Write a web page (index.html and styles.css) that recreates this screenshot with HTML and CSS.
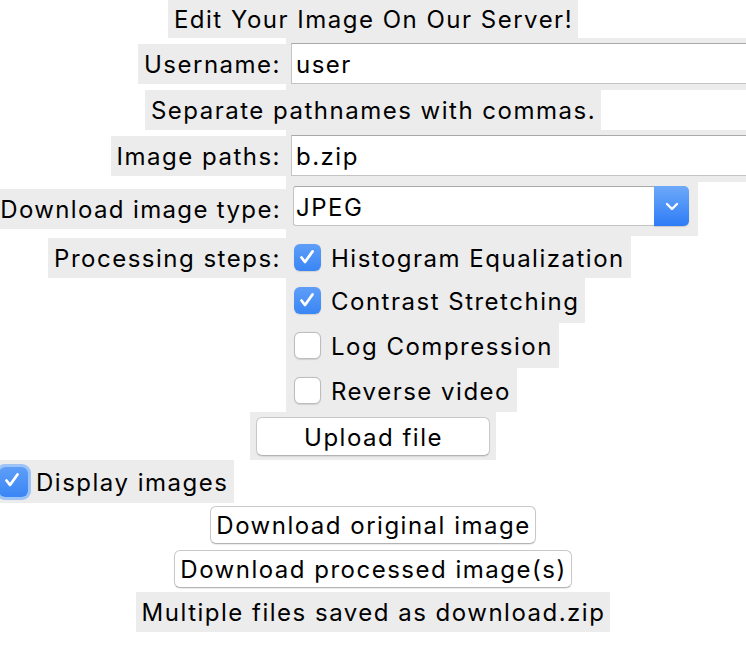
FILE: index.html
```html
<!DOCTYPE html>
<html>
<head>
<meta charset="utf-8">
<link rel="stylesheet" href="styles.css">
</head>
<body>
<div class="app">
  <div class="row-center r-title"><span class="lbl title">Edit Your Image On Our Server!</span></div>

  <div class="form-row r-entry">
    <div class="col-l"><span class="lbl">Username:</span></div>
    <div class="entry-wrap"><div class="entry">user</div></div>
  </div>

  <div class="row-center r-note"><span class="lbl">Separate pathnames with commas.</span></div>

  <div class="form-row r-entry">
    <div class="col-l"><span class="lbl">Image paths:</span></div>
    <div class="entry-wrap"><div class="entry">b.zip</div></div>
  </div>

  <div class="form-row r-combo">
    <div class="col-l"><span class="lbl tight">Download image type:</span></div>
    <div class="combo-wrap">
      <div class="combo">
        <span class="combo-val">JPEG</span>
        <span class="combo-btn"><svg width="14" height="9" viewBox="0 0 14 9"><path d="M2 2 L7 7 L12 2" fill="none" stroke="#fff" stroke-width="2.4" stroke-linecap="round" stroke-linejoin="round"/></svg></span>
      </div>
    </div>
  </div>

  <div class="form-row r-checks">
    <div class="col-l col-top"><span class="lbl">Processing steps:</span></div>
    <div class="checks">
      <div class="check c1"><span class="box on"><svg width="26" height="26" viewBox="0 0 26 26"><path d="M7.5 13.5 L11 18 L18.5 7.5" fill="none" stroke="#fff" stroke-width="2.8" stroke-linecap="round" stroke-linejoin="round"/></svg></span><span class="ctext">Histogram Equalization</span></div>
      <div class="check c2"><span class="box on"><svg width="26" height="26" viewBox="0 0 26 26"><path d="M7.5 13.5 L11 18 L18.5 7.5" fill="none" stroke="#fff" stroke-width="2.8" stroke-linecap="round" stroke-linejoin="round"/></svg></span><span class="ctext">Contrast Stretching</span></div>
      <div class="check c3"><span class="box"></span><span class="ctext">Log Compression</span></div>
      <div class="check c4"><span class="box"></span><span class="ctext">Reverse video</span></div>
    </div>
  </div>

  <div class="row-center r-upload"><div class="btn-wrap"><button class="btn upload">Upload file</button></div></div>

  <div class="r-display">
    <div class="display"><span class="box on focus"><svg width="26" height="26" viewBox="0 0 26 26"><path d="M7.5 13.5 L11 18 L18.5 7.5" fill="none" stroke="#fff" stroke-width="2.8" stroke-linecap="round" stroke-linejoin="round"/></svg></span><span class="ctext">Display images</span></div>
  </div>

  <div class="row-center r-dl1"><button class="btn">Download original image</button></div>
  <div class="row-center r-dl2"><button class="btn">Download processed image(s)</button></div>
  <div class="row-center r-multi"><span class="lbl">Multiple files saved as download.zip</span></div>
</div>
</body>
</html>
```

FILE: styles.css
```css
html, body {
  margin: 0;
  padding: 0;
  background: #ffffff;
}
body {
  width: 746px;
  height: 650px;
  overflow: hidden;
  font-family: Inter, "Open Sans", "Liberation Sans", sans-serif;
  font-size: 24px;
  letter-spacing: 1.5px;
  color: #000;
}
.app {
  display: flex;
  flex-direction: column;
  width: 746px;
}
.lbl {
  background: #ececec;
  height: 40px;
  display: inline-flex;
  align-items: center;
  padding: 1px 5px 0 6px;
  box-sizing: border-box;
  white-space: nowrap;
}
.lbl.tight {
  padding-left: 0;
  letter-spacing: 1.35px;
}
.row-center {
  display: flex;
  justify-content: center;
}
.r-title { height: 38px; }
.r-title .title { height: 38px; }
.form-row {
  display: grid;
  grid-template-columns: 286px 1fr;
  min-width: 0;
}
.col-l {
  display: flex;
  justify-content: flex-end;
  align-items: center;
}
.col-top { align-items: flex-start; padding-top: 2px; }
.r-entry { height: 52px; }
.entry-wrap {
  background: #ececec;
  padding: 5px 0 6px 5px;
  overflow: hidden;
}
.entry {
  width: 600px;
  height: 41px;
  box-sizing: border-box;
  background: #fff;
  border: 1px solid #c4c4c4;
  border-top-color: #a9a9a9;
  display: flex;
  align-items: center;
  padding-left: 4px;
  padding-top: 2px;
}
.r-note { height: 40px; }
.r-combo { height: 54px; }
.combo-wrap {
  background: #ececec;
  width: 412px;
  padding: 4px 0 0 7px;
  box-sizing: border-box;
}
.combo {
  width: 396px;
  height: 40px;
  display: flex;
  box-sizing: border-box;
}
.combo-val {
  flex: 1;
  background: #fff;
  border: 1px solid #c4c4c4;
  border-top-color: #a9a9a9;
  border-right: none;
  border-radius: 3px 0 0 3px;
  display: flex;
  align-items: center;
  padding-left: 2px;
  padding-top: 3px;
}
.combo-btn {
  width: 35px;
  background: linear-gradient(#6ea9f9, #2d7cf6);
  border-radius: 0 5px 5px 0;
  display: flex;
  align-items: center;
  justify-content: center;
  box-shadow: 0 1px 1px rgba(0,0,0,0.15);
}
.checks {
  display: flex;
  flex-direction: column;
  align-items: flex-start;
}
.check {
  background: #ececec;
  display: flex;
  align-items: center;
  padding: 0 6px 0 8px;
  white-space: nowrap;
}
.c1 { height: 42px; }
.c2 { height: 45px; }
.c3 { height: 45px; }
.c4 { height: 44px; }
.box {
  width: 27px;
  height: 27px;
  box-sizing: border-box;
  border-radius: 6px;
  background: #fff;
  border: 1px solid #bdbdbd;
  box-shadow: 0 0.5px 1px rgba(0,0,0,0.12);
  display: inline-flex;
  flex: none;
}
.box.on {
  border: none;
  background: linear-gradient(#5e9ef8, #3a86f5);
}
.box svg { display: block; }
.ctext { margin-left: 10px; padding-top: 2px; }
.r-upload { height: 48px; }
.btn-wrap {
  background: #ececec;
  padding: 5px 6px 4px 6px;
}
.btn {
  font: inherit;
  letter-spacing: 1.5px;
  color: #000;
  background: #fff;
  border: 1px solid #c8c8c8;
  border-bottom-color: #b4b4b4;
  border-radius: 6px;
  height: 38px;
  padding: 1px 4px 0 5px;
  box-shadow: 0 1px 1px rgba(0,0,0,0.08);
  white-space: nowrap;
}
.upload { width: 234px; height: 39px; }
.r-display { height: 43px; display: flex; }
.display {
  background: #ececec;
  display: flex;
  align-items: center;
  padding-right: 6px;
}
.display .box {
  margin-left: -1px;
  width: 29px;
  height: 30px;
  box-shadow: 0 0 0 3px #9ec3f7;
}
.display .ctext { margin-left: 8px; }
.r-dl1 { height: 44px; padding-top: 3px; box-sizing: border-box; }
.r-dl2 { height: 45px; padding-top: 3px; box-sizing: border-box; }
.r-multi { height: 40px; }
```
